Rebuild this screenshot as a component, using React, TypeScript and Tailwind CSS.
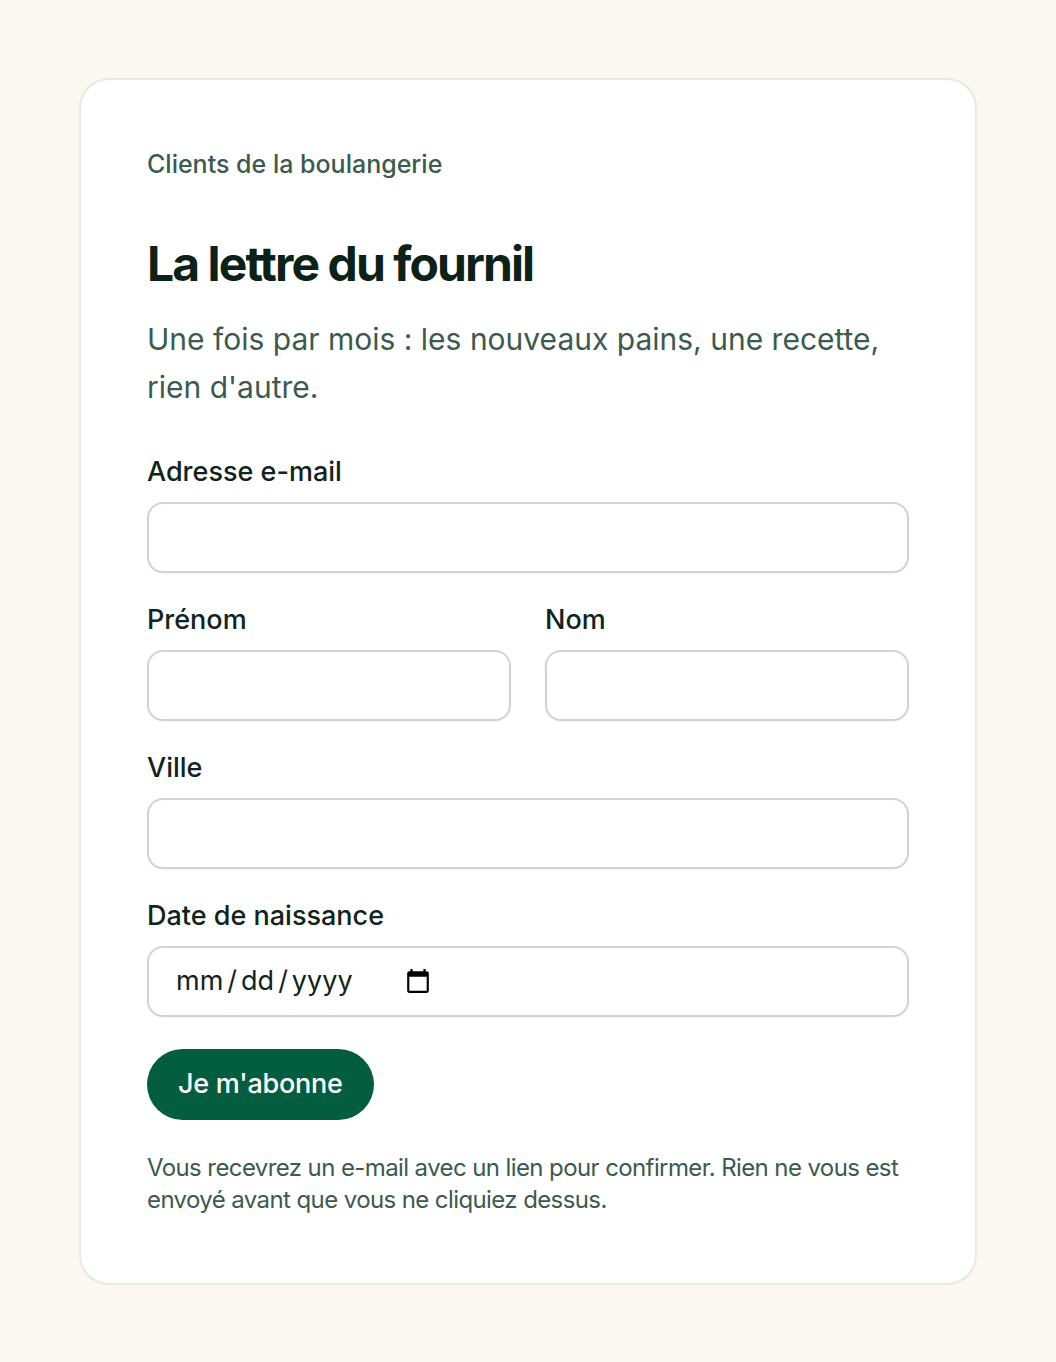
import React from 'react';

const font = { fontFamily: 'Inter, "Noto Sans", sans-serif' };

const Field: React.FC<{ label: string; type?: string; id: string; className?: string }> = ({
  label,
  type = 'text',
  id,
  className = '',
}) => (
  <div className="flex flex-col">
    <label htmlFor={id} className="text-[27px] leading-[40px] font-medium text-[#10241b] mb-[10px]">
      {label}
    </label>
    <input
      id={id}
      type={type}
      className={`h-[71px] w-full rounded-[16px] border-2 border-[#cfd4d1] bg-white px-[26px] text-[27px] text-[#10241b] shadow-[0_1px_2px_rgba(0,0,0,0.05)] outline-none ${className}`}
    />
  </div>
);

export default function App() {
  return (
    <div className="min-h-[1362px] bg-[#faf8f1] px-[79px] pt-[78px]" style={font}>
      <div className="w-[898px] rounded-[30px] border-2 border-[#ebe8de] bg-white px-[66px] pt-[66px] pb-[67px]">
        <p className="text-[25px] leading-[36px] font-medium text-[#3c5a4e]">Clients de la boulangerie</p>

        <h1 className="mt-[54px] text-[48px] leading-[56px] font-bold tracking-[-0.04em] text-[#0c2118]">
          La lettre du fournil
        </h1>
        <p className="mt-[23px] text-[30px] leading-[48px] text-[#3c5a4e]">
          Une fois par mois : les nouveaux pains, une recette, rien d'autre.
        </p>

        <form className="mt-[41px] flex flex-col gap-[27px]" onSubmit={(e) => e.preventDefault()}>
          <Field id="email" label="Adresse e-mail" type="email" />
          <div className="grid grid-cols-2 gap-[34px]">
            <Field id="prenom" label="Prénom" />
            <Field id="nom" label="Nom" />
          </div>
          <Field id="ville" label="Ville" />
          <Field
            id="naissance"
            label="Date de naissance"
            type="date"
            className="[&::-webkit-datetime-edit]:flex-none [&::-webkit-datetime-edit-text]:px-[3px] [&::-webkit-calendar-picker-indicator]:ml-[24px] [&::-webkit-calendar-picker-indicator]:h-[28px] [&::-webkit-calendar-picker-indicator]:w-[28px]"
          />

          <div className="pt-[5px]">
            <button
              type="submit"
              className="h-[71px] rounded-full bg-[#035e3f] px-[31px] text-[27px] font-medium text-white tracking-[-0.01em]"
            >
              Je m'abonne
            </button>
          </div>
        </form>

        <p className="mt-[32px] text-[24px] leading-[32px] text-[#3c5a4e] tracking-[-0.025em]">
          Vous recevrez un e-mail avec un lien pour confirmer. Rien ne vous est envoyé avant que vous ne cliquiez dessus.
        </p>
      </div>
    </div>
  );
}
